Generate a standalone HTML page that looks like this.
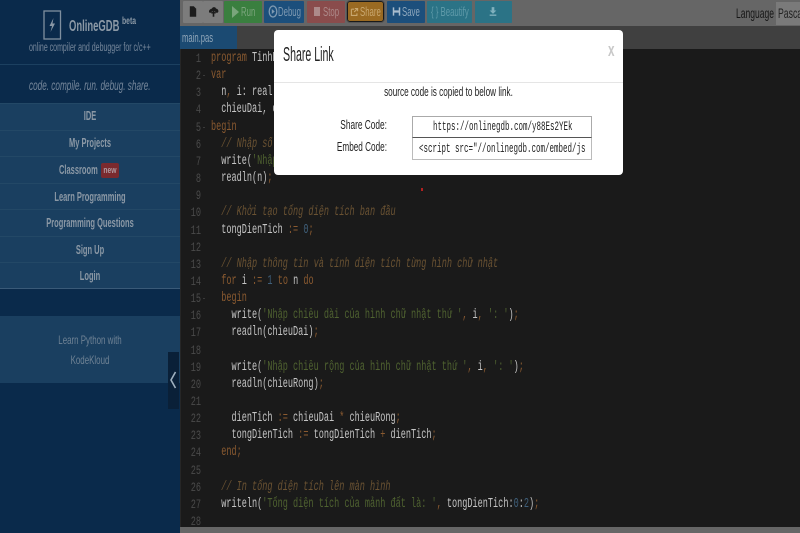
<!DOCTYPE html>
<html><head><meta charset="utf-8"><style>
html,body{margin:0;padding:0;width:800px;height:533px;overflow:hidden;background:#666}
body{position:relative;font-family:"Liberation Sans",sans-serif}
div,svg{position:absolute}
.c{left:0;width:180px;text-align:center;white-space:nowrap}
.m{font-weight:bold;font-size:12.5px;color:#8b98a5;transform:scaleX(.6);line-height:16px}
.sep{left:0;width:180px;height:1px;background:#234866}
.b{top:1px;height:22px;border-radius:1px}
.bt{top:4px;font-size:13px;line-height:16px;white-space:nowrap;transform:scaleX(.6);transform-origin:left center}
#code div{left:0;height:17.15px;line-height:17.15px;white-space:pre;font-family:"Liberation Mono","DejaVu Sans Mono",monospace;font-size:13.5px;color:#c4c4c4;transform:scaleX(.633);transform-origin:left center}
i{font-style:italic;color:#6a5232}
u{text-decoration:none;color:#8a5a30}
s{text-decoration:none;color:#4f6230}
b{font-weight:normal;color:#3f5f7a}
.n{left:0;width:20px;text-align:right;height:17.15px;line-height:17.15px;font-family:"Liberation Mono",monospace;font-size:13px;color:#4a4a4a;transform:scaleX(.66);transform-origin:right center}
.f{left:22px;width:2px;height:1px;background:#3a3a3a}
</style></head><body>
<div style="left:0;top:0;width:180px;height:533px;background:#0a2a4b"></div>
<div class="sep" style="top:64px;background:#1c4060"></div>
<svg style="left:43px;top:10px" width="19" height="30" viewBox="0 0 19 30"><rect x="1" y="1" width="16.5" height="28" fill="none" stroke="#7f8f9f" stroke-width="1.3"/><path d="M10.5 8L6.5 16H9L7.5 22L12 13.5H9.5Z" fill="#8a98a6"/></svg>
<div style="left:69px;top:17px;font-size:15.5px;line-height:20px;font-weight:bold;color:#8c99a6;transform:scaleX(.61);transform-origin:left center;white-space:nowrap">OnlineGDB</div>
<div style="left:122px;top:15px;font-size:10.5px;line-height:13px;font-weight:bold;color:#8c99a6;transform:scaleX(.65);transform-origin:left center">beta</div>
<div style="left:29px;top:40px;font-size:11.5px;line-height:16px;color:#75869a;transform:scaleX(.61);transform-origin:left center;white-space:nowrap">online compiler and debugger for c/c++</div>
<div style="left:29px;top:76px;font-size:14px;line-height:18px;font-style:italic;color:#75869a;transform:scaleX(.585);transform-origin:left center;white-space:nowrap">code. compile. run. debug. share.</div>
<div style="left:0;top:103px;width:180px;height:185px;background:#1a3f60"></div>
<div class="sep" style="top:103px"></div><div class="sep" style="top:130px"></div><div class="sep" style="top:156px"></div><div class="sep" style="top:183px"></div><div class="sep" style="top:209px"></div><div class="sep" style="top:236px"></div><div class="sep" style="top:262px"></div><div class="sep" style="top:288px;background:#3a5a78"></div>
<div class="c m" style="top:108px">IDE</div>
<div class="c m" style="top:135px">My Projects</div>
<div style="left:59px;top:162px;font-weight:bold;font-size:12.5px;line-height:16px;color:#8b98a5;transform:scaleX(.6);transform-origin:left center;white-space:nowrap">Classroom</div>
<div style="left:101px;top:163px;width:18px;height:15px;background:#7a2a2e;border-radius:2px"></div>
<div style="left:101px;top:163px;width:18px;color:#b09aa0;font-size:9px;font-weight:bold;line-height:14px;text-align:center;transform:scaleX(.75)">new</div>
<div class="c m" style="top:189px">Learn Programming</div>
<div class="c m" style="top:215px">Programming Questions</div>
<div class="c m" style="top:242px">Sign Up</div>
<div class="c m" style="top:268px">Login</div>
<div style="left:0;top:316px;width:180px;height:67px;background:#1a3f60"></div>
<div class="c" style="top:332px;font-size:12px;line-height:16px;color:#6f8294;transform:scaleX(.66)">Learn Python with</div>
<div class="c" style="top:352px;font-size:12px;line-height:16px;color:#6f8294;transform:scaleX(.66)">KodeKloud</div>
<div style="left:168px;top:352px;width:11px;height:57px;background:#0a2038"></div>
<svg style="left:168px;top:370px" width="11" height="20" viewBox="0 0 11 20"><path d="M7.5 2L3 10L7.5 18" fill="none" stroke="#9fb0bf" stroke-width="1.6"/></svg>

<div style="left:180px;top:0;width:620px;height:26px;background:#666"></div>
<div class="b" style="left:183px;width:20px;background:#7c7c7c"></div>
<div class="b" style="left:203px;width:20px;background:#7c7c7c"></div>
<svg style="left:189px;top:4px" width="8" height="15" viewBox="0 0 10 15"><path d="M1 1H6L9 4V14H1Z" fill="#1c1c1c"/></svg>
<svg style="left:207px;top:4px" width="13" height="15" viewBox="0 0 16 15"><path d="M3 9C1 6 5 4 6 4C7 1 11 2 11 4C14 4 15 8 13 9H10V7H6V9Z M8 6L11 10H9V14H7V10H5Z" fill="#1c1c1c"/></svg>
<div class="b" style="left:224px;width:38px;background:#3a7f3f"></div>
<svg style="left:232px;top:6px" width="7" height="12"><path d="M0 0L7 6L0 12Z" fill="#7aa57c"/></svg>
<div class="bt" style="left:241px;color:#7aa57c">Run</div>
<div class="b" style="left:264px;width:40px;background:#1c4f7c"></div>
<svg style="left:268px;top:4px" width="10" height="15"><ellipse cx="5" cy="7.5" rx="3.8" ry="5.5" fill="none" stroke="#7f9ab2" stroke-width="1.3"/><path d="M3.8 5L6.8 7.5L3.8 10Z" fill="#7f9ab2"/></svg>
<div class="bt" style="left:278px;color:#7f9ab2">Debug</div>
<div class="b" style="left:307px;width:38px;background:#8a4c4c"></div>
<div style="left:314px;top:7px;width:6px;height:9px;background:#ad8a8a"></div>
<div class="bt" style="left:323px;color:#ad8a8a">Stop</div>
<div class="b" style="left:347px;top:1px;width:37px;height:21px;background:#9a6a22;border:1px solid #1a1a1a;box-sizing:border-box;outline:1px solid #555;border-radius:3px"></div>
<svg style="left:350px;top:5px" width="9" height="14" viewBox="0 0 13 14"><path d="M2 3H6M10 9V12H2V3M6 7L10 3M7 2H11V6" fill="none" stroke="#c9a870" stroke-width="1.6"/></svg>
<div class="bt" style="left:360px;color:#c9a870">Share</div>
<div class="b" style="left:387px;width:38px;background:#1c4f7c"></div>
<svg style="left:392px;top:5px" width="9" height="13" viewBox="0 0 12 13"><path d="M1 1H3V5H9V1H11V12H9V8H3V12H1Z" fill="#a8bccd"/></svg>
<div class="bt" style="left:402px;color:#8fa8bd">Save</div>
<div class="b" style="left:427px;width:45px;background:#2b7386"></div>
<div class="bt" style="left:431px;color:#5f9aa9">{ } Beautify</div>
<div class="b" style="left:475px;width:37px;background:#2b7386"></div>
<svg style="left:489px;top:5px" width="8" height="13" viewBox="0 0 12 13"><path d="M4 0H8V5H11L6 10L1 5H4ZM1 11H11V13H1Z" fill="#7fb0bd"/></svg>
<div style="left:736px;top:5px;font-size:14px;line-height:16px;color:#161616;transform:scaleX(.61);transform-origin:left center">Language</div>
<div style="left:776px;top:2px;width:24px;height:23px;background:#7a7a7a"></div>
<div style="left:778px;top:5px;font-size:14px;line-height:16px;color:#222;transform:scaleX(.62);transform-origin:left center;white-space:nowrap">Pascal</div>

<div style="left:180px;top:26px;width:620px;height:23px;background:#404040"></div>
<div style="left:180px;top:26px;width:57px;height:23px;background:#1b4a72"></div>
<div style="left:182px;top:30px;font-size:13px;line-height:16px;color:#8fa5b8;transform:scaleX(.59);transform-origin:left center">main.pas</div>
<div style="left:180px;top:49px;width:620px;height:478px;background:#1a1a1a"></div>
<div style="left:180px;top:49px;width:1px;height:478px;background:#262626"></div>
<div id="nums" style="left:181px;top:50px;width:26px;height:477px">
<div class="n" style="top:0">1</div><div class="n" style="top:17.15px">2</div><div class="n" style="top:34.3px">3</div><div class="n" style="top:51.45px">4</div><div class="n" style="top:68.6px">5</div><div class="n" style="top:85.75px">6</div><div class="n" style="top:102.9px">7</div><div class="n" style="top:120.05px">8</div><div class="n" style="top:137.2px">9</div><div class="n" style="top:154.35px">10</div><div class="n" style="top:171.5px">11</div><div class="n" style="top:188.65px">12</div><div class="n" style="top:205.8px">13</div><div class="n" style="top:222.95px">14</div><div class="n" style="top:240.1px">15</div><div class="n" style="top:257.25px">16</div><div class="n" style="top:274.4px">17</div><div class="n" style="top:291.55px">18</div><div class="n" style="top:308.7px">19</div><div class="n" style="top:325.85px">20</div><div class="n" style="top:343px">21</div><div class="n" style="top:360.15px">22</div><div class="n" style="top:377.3px">23</div><div class="n" style="top:394.45px">24</div><div class="n" style="top:411.6px">25</div><div class="n" style="top:428.75px">26</div><div class="n" style="top:445.9px">27</div><div class="n" style="top:463.05px">28</div>
<div class="f" style="top:25px"></div><div class="f" style="top:77px"></div><div class="f" style="top:248px"></div>
</div>
<div id="code" style="left:211px;top:50px;width:589px;height:477px">
<div style="top:0"><u>program</u> TinhDienTich;</div>
<div style="top:17.15px"><u>var</u></div>
<div style="top:34.3px">  n<u>,</u> i: real;</div>
<div style="top:51.45px">  chieuDai, chieuRong: real;</div>
<div style="top:68.6px"><u>begin</u></div>
<div style="top:85.75px">  <i>// Nhập số lượng hình</i></div>
<div style="top:102.9px">  write(<s>'Nhập số lượng'</s>);</div>
<div style="top:120.05px">  readln(n)<u>;</u></div>
<div style="top:154.35px">  <i>// Khởi tạo tổng diện tích ban đầu</i></div>
<div style="top:171.5px">  tongDienTich <u>:=</u> <b>0</b><u>;</u></div>
<div style="top:205.8px">  <i>// Nhập thông tin và tính diện tích từng hình chữ nhật</i></div>
<div style="top:222.95px">  <u>for</u> i <u>:=</u> <b>1</b> <u>to</u> n <u>do</u></div>
<div style="top:240.1px">  <u>begin</u></div>
<div style="top:257.25px">    write(<s>'Nhập chiều dài của hình chữ nhật thứ '</s><u>,</u> i<u>,</u> <s>': '</s>)<u>;</u></div>
<div style="top:274.4px">    readln(chieuDai)<u>;</u></div>
<div style="top:308.7px">    write(<s>'Nhập chiều rộng của hình chữ nhật thứ '</s><u>,</u> i<u>,</u> <s>': '</s>)<u>;</u></div>
<div style="top:325.85px">    readln(chieuRong)<u>;</u></div>
<div style="top:360.15px">    dienTich <u>:=</u> chieuDai <u>*</u> chieuRong<u>;</u></div>
<div style="top:377.3px">    tongDienTich <u>:=</u> tongDienTich <u>+</u> dienTich<u>;</u></div>
<div style="top:394.45px">  <u>end;</u></div>
<div style="top:428.75px">  <i>// In tổng diện tích lên màn hình</i></div>
<div style="top:445.9px">  writeln(<s>'Tổng diện tích của mảnh đất là: '</s><u>,</u> tongDienTich:<b>0</b>:<b>2</b>)<u>;</u></div>
</div>
<div style="left:421px;top:188px;width:2px;height:3px;background:#b02020"></div>

<div style="left:274px;top:30px;width:349px;height:145px;background:#fff;border-radius:4px"></div>
<div style="left:283px;top:45px;font-size:20px;line-height:20px;color:#222;transform:scaleX(.53);transform-origin:left center;white-space:nowrap">Share Link</div>
<div style="left:608px;top:40px;font-size:18px;line-height:20px;font-weight:bold;color:#c8c8c8;transform:scaleX(.65);transform-origin:left center">x</div>
<div style="left:274px;top:82px;width:349px;height:1px;background:#e5e5e5"></div>
<div style="left:274px;top:84px;width:349px;text-align:center;font-size:13px;line-height:16px;color:#222;transform:scaleX(.63);white-space:nowrap">source code is copied to below link.</div>
<div style="left:287px;width:100px;top:117px;text-align:right;font-size:13px;line-height:16px;color:#222;transform:scaleX(.64);transform-origin:right center;white-space:nowrap">Share Code:</div>
<div style="left:287px;width:100px;top:139px;text-align:right;font-size:13px;line-height:16px;color:#222;transform:scaleX(.63);transform-origin:right center;white-space:nowrap">Embed Code:</div>
<div style="left:412px;top:116px;width:180px;height:22px;box-sizing:border-box;border:1px solid #aaa;border-bottom-color:#555;background:#fff"></div>
<div style="left:412px;top:138px;width:180px;height:22px;box-sizing:border-box;border:1px solid #bbb;border-top:0;background:#fff"></div>
<div style="left:433px;top:119px;font-family:'Liberation Mono',monospace;font-size:12.5px;line-height:16px;color:#222;transform:scaleX(.6);transform-origin:left center;white-space:nowrap">https://onlinegdb.com/y88Es2YEk</div>
<div style="left:419px;top:141px;font-family:'Liberation Mono',monospace;font-size:12.5px;line-height:16px;color:#222;transform:scaleX(.6);transform-origin:left center;white-space:nowrap">&lt;script src="//onlinegdb.com/embed/js</div>
</body></html>
